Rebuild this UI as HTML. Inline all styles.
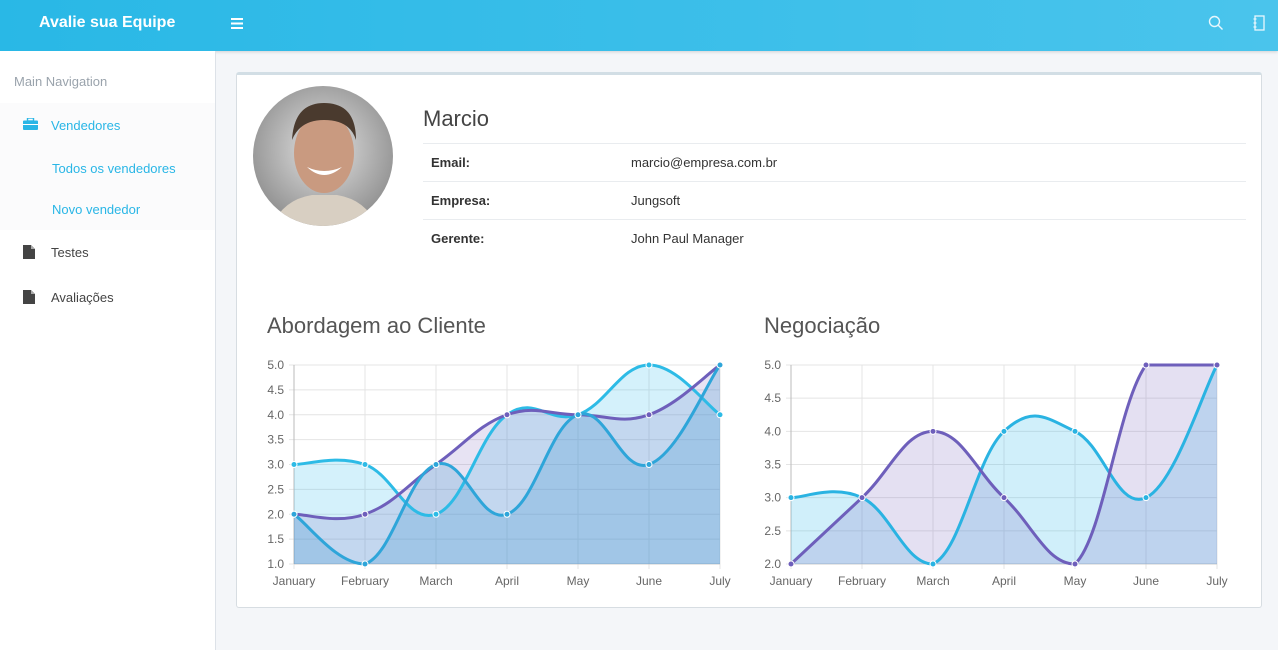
<!DOCTYPE html>
<html><head><meta charset="utf-8"><style>
*{box-sizing:border-box;margin:0;padding:0}
body{width:1278px;height:650px;overflow:hidden;background:#f4f6f9;font-family:"Liberation Sans",sans-serif;position:relative}
.hdr{position:absolute;left:0;top:0;width:1278px;height:51px;background:linear-gradient(90deg,#29b8e6,#4ac4ec);box-shadow:0 1px 3px rgba(0,0,0,.15)}
.logo{position:absolute;left:39px;top:14px;color:#fff;font-size:16px;font-weight:bold}
.side{position:absolute;left:0;top:51px;width:216px;height:599px;background:#fff;border-right:1px solid #dde2e8}
.side .t{position:absolute;left:14px;top:23px;font-size:13px;color:#9aa3ac}
.grp{position:absolute;left:0;top:52px;width:215px;height:127px;background:#fbfbfc}
.it{position:absolute;font-size:13px}
.box{position:absolute;left:236px;top:72px;width:1026px;height:536px;background:#fff;border:1px solid #d7dde2;border-top:3px solid #d2dee5;border-radius:3px}
table{position:absolute;left:186px;top:68px;width:823px;border-collapse:collapse;font-size:13px;color:#333}
td{border-top:1px solid #e9ecef;height:38px;padding-left:8px}
td.k{font-weight:bold;width:200px}
h2{position:absolute;font-size:22px;font-weight:normal;color:#555}
</style></head><body>
<div class="hdr"><div class="logo">Avalie sua Equipe</div>
<svg style="position:absolute;left:231px;top:18px" width="12" height="11"><rect y="0" width="12" height="2" fill="#fff"/><rect y="4.5" width="12" height="2" fill="#fff"/><rect y="9" width="12" height="2" fill="#fff"/></svg>
<svg style="position:absolute;left:1208px;top:15px" width="16" height="16" fill="none" stroke="#e8f7fd" stroke-width="1.4"><circle cx="6.5" cy="6.5" r="5"/><path d="M10 10l4.5 4.5"/></svg>
<svg style="position:absolute;left:1253px;top:15px" width="12" height="16" fill="none" stroke="#e8f7fd" stroke-width="1.3"><rect x="2" y="1" width="9" height="14"/><path d="M0.5 4h3M0.5 8h3M0.5 12h3"/></svg>
</div>
<div class="side"><div class="t">Main Navigation</div>
<div class="grp"></div>
<svg style="position:absolute;left:23px;top:67px" width="15" height="12"><rect x="4.5" y="0" width="6" height="3" fill="none" stroke="#29b6e6" stroke-width="1.4"/><rect x="0" y="2.5" width="15" height="9.5" rx="1" fill="#29b6e6"/><rect x="0" y="6" width="15" height="1" fill="#fff"/></svg>
<div class="it" style="left:51px;top:67px;color:#29b6e6">Vendedores</div>
<div class="it" style="left:52px;top:110px;color:#29b6e6">Todos os vendedores</div>
<div class="it" style="left:52px;top:151px;color:#29b6e6">Novo vendedor</div>
<svg style="position:absolute;left:23px;top:194px" width="12" height="14"><path d="M0 0h8l4 4v10H0z" fill="#444"/><path d="M8 0v4h4" fill="#aaa"/></svg>
<div class="it" style="left:51px;top:194px;color:#444">Testes</div>
<svg style="position:absolute;left:23px;top:239px" width="12" height="14"><path d="M0 0h8l4 4v10H0z" fill="#444"/><path d="M8 0v4h4" fill="#aaa"/></svg>
<div class="it" style="left:51px;top:239px;color:#444">Avaliações</div>
</div>
<div class="box">
<svg style="position:absolute;left:15px;top:10px" width="142" height="142"><defs><radialGradient id="bg" cx=".5" cy=".45" r=".6"><stop offset="0" stop-color="#e4e4e4"/><stop offset="1" stop-color="#8a8a8a"/></radialGradient><clipPath id="cc"><circle cx="71" cy="71" r="70"/></clipPath></defs>
<g clip-path="url(#cc)"><rect width="142" height="142" fill="url(#bg)"/><path d="M20 142 Q30 115 60 110 L85 110 Q115 115 125 142Z" fill="#d8cfc2"/><ellipse cx="72" cy="68" rx="30" ry="40" fill="#c99a80"/><path d="M40 55 Q42 18 72 18 Q104 18 104 55 Q98 35 72 35 Q48 35 40 55Z" fill="#4a3a2e"/><path d="M55 82 Q72 98 90 82 Q72 90 55 82Z" fill="#fff"/></g></svg>
<h2 style="left:186px;top:31px;color:#444">Marcio</h2>
<table><tr><td class="k">Email:</td><td>marcio@empresa.com.br</td></tr><tr><td class="k">Empresa:</td><td>Jungsoft</td></tr><tr><td class="k">Gerente:</td><td>John Paul Manager</td></tr></table>
<h2 style="left:30px;top:238px">Abordagem ao Cliente</h2>
<h2 style="left:527px;top:238px">Negociação</h2>
</div>
<svg id="c" style="position:absolute;left:0;top:0" width="1278" height="650"></svg>
<script>
var s='',F='font-family="Liberation Sans" font-size="12" fill="#666"';
var L=['January','February','March','April','May','June','July'];
var TOP=365,BOT=564;
function cl(y){return Math.max(TOP,Math.min(BOT,y))}
function path(x0,ys){var p=ys.map(function(y,i){return [x0+i*71,y]}),d='M'+p[0];
for(var i=0;i<6;i++){var a=p[i],b=p[i+1],pr=p[i-1]||a,nx=p[i+2]||b;
var c1=[a[0]+(b[0]-pr[0])*0.2,cl(a[1]+(b[1]-pr[1])*0.2)],c2=[b[0]-(nx[0]-a[0])*0.2,cl(b[1]-(nx[1]-a[1])*0.2)];
d+=' C'+c1+' '+c2+' '+b;}return d;}
function chart(x0,ymin,ymax,step,ds){var top=TOP,bot=BOT,k=(bot-top)/(ymax-ymin),x1=x0+426;
for(var v=ymin;v<=ymax+1e-9;v+=step){var y=bot-(v-ymin)*k;s+='<line x1="'+(x0-5)+'" x2="'+x1+'" y1="'+y+'" y2="'+y+'" stroke="#e4e4e4"/>';s+='<text x="'+(x0-10)+'" y="'+(y+4)+'" text-anchor="end" '+F+'>'+v.toFixed(1)+'</text>';}
for(var i=0;i<7;i++){var x=x0+i*71;s+='<line x1="'+x+'" x2="'+x+'" y1="'+top+'" y2="'+(bot+5)+'" stroke="#e4e4e4"/><text x="'+x+'" y="585" text-anchor="middle" '+F+'>'+L[i]+'</text>';}
s+='<line x1="'+x0+'" x2="'+x0+'" y1="'+top+'" y2="'+bot+'" stroke="#bbb"/><line x1="'+x0+'" x2="'+x1+'" y1="'+bot+'" y2="'+bot+'" stroke="#ccc"/>';
ds.forEach(function(d){var ys=d.v.map(function(v){return bot-(v-ymin)*k}),p=path(x0,ys);
if(d.f)s+='<path d="'+p+' L'+x1+','+bot+' L'+x0+','+bot+'Z" fill="'+d.f+'"/>';});
ds.forEach(function(d){var ys=d.v.map(function(v){return bot-(v-ymin)*k});
s+='<path d="'+path(x0,ys)+'" fill="none" stroke="'+d.c+'" stroke-width="3"/>';
ys.forEach(function(y,i){s+='<circle cx="'+(x0+i*71)+'" cy="'+y+'" r="3" fill="'+d.c+'" stroke="#fff" stroke-width="1"/>'});});}
chart(294,1,5,0.5,[{v:[3,3,2,4,4,5,4],c:'#2dbbe6',f:'rgba(60,190,235,0.22)'},{v:[2,2,3,4,4,4,5],c:'#6e5fbb',f:'rgba(120,100,190,0.18)'},{v:[2,1,3,2,4,3,5],c:'#2ea5d9',f:'rgba(40,140,205,0.22)'}]);
chart(791,2,5,0.5,[{v:[3,3,2,4,4,3,5],c:'#2ab3e2',f:'rgba(60,190,235,0.24)'},{v:[2,3,4,3,2,5,5],c:'#6e5fbb',f:'rgba(120,100,190,0.2)'}]);
document.getElementById('c').innerHTML=s;
</script>
</body></html>
